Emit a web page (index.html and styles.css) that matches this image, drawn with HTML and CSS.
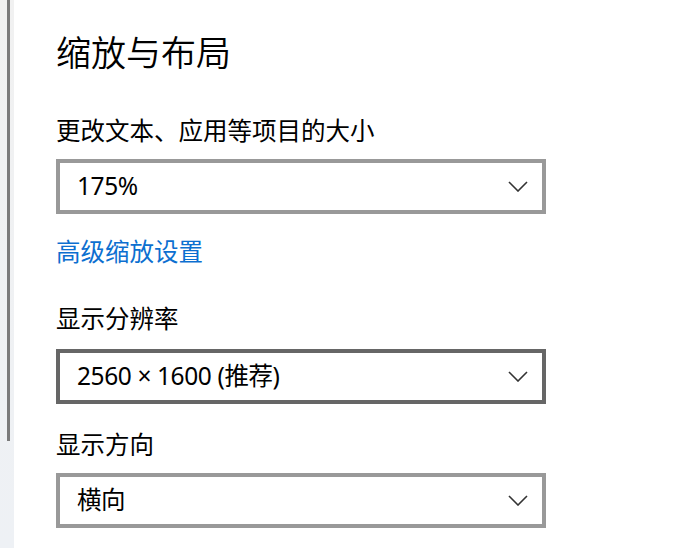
FILE: index.html
```html
<!DOCTYPE html>
<html lang="zh-CN">
<head>
<meta charset="utf-8">
<title>缩放与布局</title>
<link rel="stylesheet" href="styles.css">
</head>
<body>
<div class="page">
  <aside class="rail"><div class="thumb"></div></aside>
  <main class="content">
    <h1 class="title">缩放与布局</h1>
    <div class="label label-first">更改文本、应用等项目的大小</div>
    <div class="combo combo-first">
      <span class="value">175%</span>
      <svg class="chev" width="20" height="11" viewBox="0 0 20 11"><path d="M1 1 L10 10 L19 1" fill="none" stroke="#333" stroke-width="1.6"/></svg>
    </div>
    <a class="link" href="#">高级缩放设置</a>
    <div class="label label-res">显示分辨率</div>
    <div class="combo combo-hover combo-res">
      <span class="value">2560 × 1600 (推荐)</span>
      <svg class="chev" width="20" height="11" viewBox="0 0 20 11"><path d="M1 1 L10 10 L19 1" fill="none" stroke="#333" stroke-width="1.6"/></svg>
    </div>
    <div class="label label-dir">显示方向</div>
    <div class="combo combo-dir">
      <span class="value">横向</span>
      <svg class="chev" width="20" height="11" viewBox="0 0 20 11"><path d="M1 1 L10 10 L19 1" fill="none" stroke="#333" stroke-width="1.6"/></svg>
    </div>
  </main>
</div>
</body>
</html>
```

FILE: styles.css
```css
html, body {
  margin: 0;
  padding: 0;
  background: #ffffff;
  height: 100%;
  overflow: hidden;
}
body {
  font-family: "Noto Sans", "Noto Sans CJK SC", sans-serif;
  color: #000000;
}
.page {
  display: flex;
  height: 548px;
}
.rail {
  width: 14px;
  flex: 0 0 14px;
  background: linear-gradient(#f1f1f1, #eef1f5);
  display: flex;
  justify-content: flex-start;
}
.thumb {
  width: 3px;
  height: 441px;
  margin-left: 7px;
  background: #7b7b7b;
}
.content {
  flex: 1;
  padding-left: 42px;
  padding-top: 35px;
  display: flex;
  flex-direction: column;
  align-items: flex-start;
}
.title {
  margin: 0;
  font-size: 35px;
  line-height: 36px;
  font-weight: 350;
}
.label {
  font-size: 24.5px;
  line-height: 24.5px;
}
.label-first { margin-top: 48px; }
.label-res { margin-top: 43px; }
.label-dir { margin-top: 29px; }
.combo {
  box-sizing: border-box;
  width: 490px;
  height: 55px;
  border: 4px solid #999999;
  display: flex;
  align-items: center;
  justify-content: space-between;
  padding: 0 14px 0 17px;
  font-size: 24.5px;
}
.combo-first { margin-top: 15px; }
.combo-res { margin-top: 17px; }
.combo-dir { margin-top: 16px; }
.combo-hover { border-color: #666666; }
.value {
  line-height: 24.5px;
  letter-spacing: -0.4px;
}
.chev {
  display: block;
}
.link {
  margin-top: 26px;
  font-size: 24.5px;
  line-height: 24.5px;
  color: #0c6fd0;
  text-decoration: none;
}
```
